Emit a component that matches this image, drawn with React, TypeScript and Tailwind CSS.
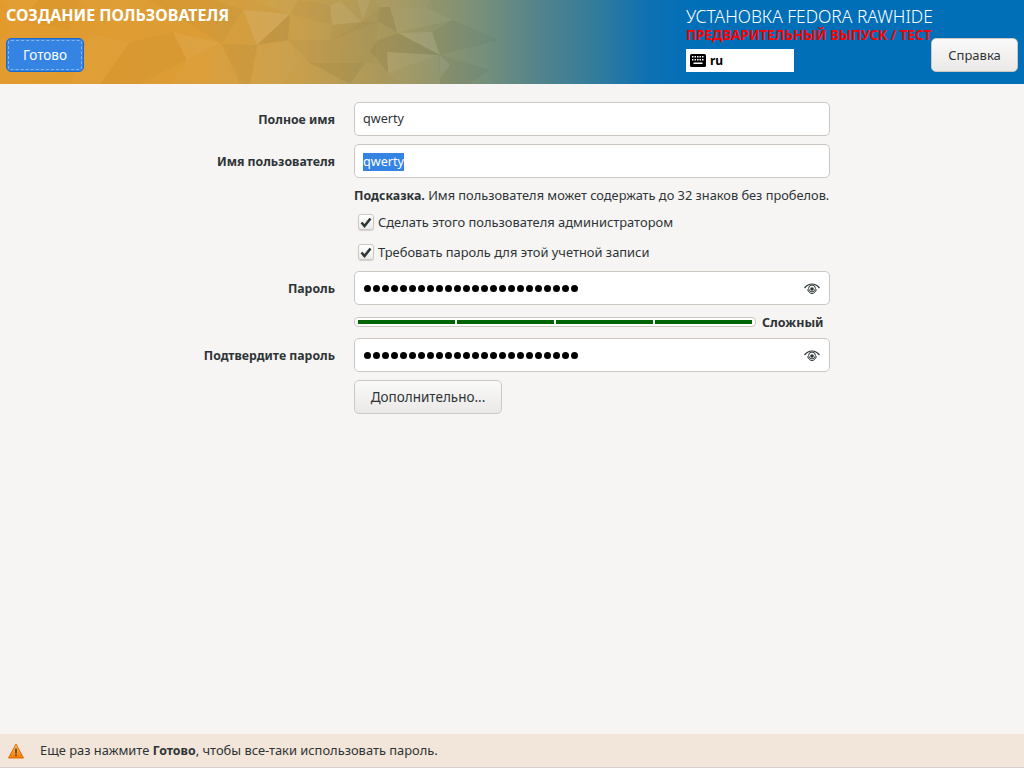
import React from "react";

const facets: [string, string, number][] = [
  ["0,0 38,0 22,22", "#fff", 0.03],
  ["38,0 80,0 70,30 22,22", "#000", 0.015],
  ["80,0 150,0 118,24", "#fff", 0.025],
  ["0,40 22,22 60,75 0,84", "#fff", 0.02],
  ["90,34 130,42 100,84 70,84", "#fff", 0.03],
  ["130,42 173,32 187,60 140,84 100,84", "#000", 0.02],
  ["173,32 220,43 187,60", "#fff", 0.055],
  ["187,60 220,43 245,84 170,84", "#fff", 0.025],
  ["150,0 215,0 243,10 222,44", "#000", 0.025],
  ["243,10 290,14 257,45", "#fff", 0.09],
  ["290,14 257,45 288,40", "#000", 0.05],
  ["250,0 290,14 298,0", "#fff", 0.03],
  ["222,44 257,45 250,84 240,84", "#000", 0.03],
  ["257,45 288,40 300,62 282,84 250,84", "#fff", 0.025],
  ["288,40 330,40 380,63 310,63", "#000", 0.025],
  ["298,0 330,5 332,25 290,14", "#000", 0.02],
  ["330,5 340,1 362,22 332,25", "#fff", 0.07],
  ["357,0 370,0 363,20", "#fff", 0.07],
  ["332,25 362,22 378,22 330,40", "#000", 0.025],
  ["362,22 380,7 378,22 375,60 330,40", "#000", 0.02],
  ["380,7 390,7 397,32 378,22", "#000", 0.05],
  ["390,7 427,8 452,20 397,33", "#fff", 0.05],
  ["375,0 430,0 427,8 380,7", "#fff", 0.035],
  ["398,33 432,32 440,55", "#fff", 0.09],
  ["378,40 398,33 440,55 370,51", "#000", 0.05],
  ["387,52 438,55 388,73", "#fff", 0.07],
  ["370,51 387,52 388,73", "#000", 0.05],
  ["310,63 365,63 350,84", "#000", 0.05],
  ["440,55 450,65 440,78", "#fff", 0.09],
  ["452,20 432,32 440,55 500,40", "#000", 0.03],
  ["388,73 438,55 440,84 400,84", "#fff", 0.03],
  ["440,55 490,70 470,84 440,84", "#000", 0.03],
];

function HeaderArt() {
  return (
    <svg className="absolute inset-0 h-full w-full" viewBox="0 0 1024 84" aria-hidden="true">
      {facets.map(([points, fill, opacity]) => (
        <polygon key={points} points={points} fill={fill} fillOpacity={opacity} />
      ))}
    </svg>
  );
}

function KeyboardIcon() {
  return (
    <svg width="16" height="13" viewBox="0 0 16 13" aria-hidden="true">
      <rect x="0" y="0" width="16" height="13" rx="1.5" fill="#000" />
      <g fill="#fff">
        {[2, 4.5, 7, 9.5, 12].map((x) => (
          <React.Fragment key={x}>
            <rect x={x} y="2" width="1.5" height="1.5" />
            <rect x={x} y="5" width="1.5" height="1.5" />
          </React.Fragment>
        ))}
        <rect x="3.5" y="8.5" width="9" height="1.5" />
      </g>
    </svg>
  );
}

function EyeIcon() {
  return (
    <svg width="16" height="12" viewBox="0 0 16 12" fill="none" stroke="#2e3436" aria-hidden="true">
      <path d="M0.5 5C3 2 5.5 1 8 1s5 1 7.5 4" strokeWidth="1.2" />
      <path d="M3.5 6.5C4.5 9.5 6.5 10.5 8 10.5s3.5-1 4.5-4" strokeWidth="1" />
      <circle cx="8" cy="5.5" r="3.4" strokeWidth="1" />
      <circle cx="8" cy="6" r="1.8" fill="#2e3436" stroke="none" />
    </svg>
  );
}

function WarningIcon() {
  return (
    <svg width="16" height="16" viewBox="0 0 16 16" aria-hidden="true">
      <defs>
        <linearGradient id="warn" x1="0" y1="0" x2="0" y2="1">
          <stop offset="0" stopColor="#fcc27c" />
          <stop offset="1" stopColor="#f57900" />
        </linearGradient>
      </defs>
      <path d="M8 1 15.5 15H0.5Z" fill="url(#warn)" stroke="#e06a00" strokeLinejoin="round" />
      <rect x="7.3" y="5.5" width="1.4" height="5" fill="#2e3436" />
      <rect x="7.3" y="11.5" width="1.4" height="1.6" fill="#2e3436" />
    </svg>
  );
}

function Check({ label }: { label: string }) {
  return (
    <div className="flex h-5 items-center pl-[4px] text-[12.9px] text-[#2e3436]">
      <span className="flex h-4 w-4 items-center justify-center rounded-[3px] border border-[#cdc7c2] bg-gradient-to-b from-white to-[#ececea] shadow-[0_1px_1px_rgba(0,0,0,0.15)]">
        <svg width="12" height="11" viewBox="0 0 12 11" fill="none" aria-hidden="true">
          <path d="M1.5 5.5 4.5 9 10.5 1.5" stroke="#2e3436" strokeWidth="2.6" />
        </svg>
      </span>
      <span className="ml-[4px] pt-px">{label}</span>
    </div>
  );
}

function Row({ label, className, children }: { label?: string; className: string; children: React.ReactNode }) {
  return (
    <div className={`flex items-center ${className}`}>
      <div className="mr-[19px] w-[335px] pt-[2px] text-right text-[12.3px] font-bold text-[#2e3436]">{label}</div>
      <div className="w-[476px]">{children}</div>
    </div>
  );
}

function Field({ children }: { children: React.ReactNode }) {
  return (
    <div className="flex h-[34px] items-center rounded-[5px] border border-[#cdc7c2] bg-white px-[8px] pt-px text-[12.6px] text-[#2e3436]">
      {children}
    </div>
  );
}

function PasswordField() {
  return (
    <Field>
      <div className="flex gap-[2px] pl-[1px]">
        {Array.from({ length: 24 }).map((_, i) => (
          <span key={i} className="h-[7px] w-[7px] rounded-full bg-black" />
        ))}
      </div>
      <span className="mr-[1px] ml-auto flex">
        <EyeIcon />
      </span>
    </Field>
  );
}

export default function App() {
  return (
    <div className="flex h-screen w-[1024px] flex-col overflow-hidden bg-[#f6f5f4] font-['Noto_Sans','Open_Sans',sans-serif]">
      <header className="relative flex h-[84px] shrink-0 bg-[linear-gradient(90deg,#e29a2b_0px,#dc9d36_200px,#c89f4c_300px,#a3975f_400px,#78907a_480px,#558489_535px,#337c9c_595px,#0d70b3_650px,#006fb8_700px)] px-[6px]">
        <HeaderArt />
        <div className="relative">
          <h1 className="mt-[5px] h-[20px] text-[16px] leading-[20px] font-bold whitespace-nowrap text-white">
            СОЗДАНИЕ ПОЛЬЗОВАТЕЛЯ
          </h1>
          <button className="mt-[13px] flex h-[34px] w-[78px] items-center justify-center rounded-[5px] border border-[#1b6acb] bg-[#3584e4] pt-px text-[13.5px] text-white outline-1 -outline-offset-3 outline-white/40 outline-dashed">
            Готово
          </button>
        </div>
        <div className="relative mt-[6px] ml-auto w-[245px]">
          <div className="h-[20px] text-[17.4px] leading-[20px] font-light whitespace-nowrap text-white">
            УСТАНОВКА FEDORA RAWHIDE
          </div>
          <div className="h-[16px] pt-px text-[13.4px] leading-[16px] font-bold whitespace-nowrap text-[#ff0000]">
            ПРЕДВАРИТЕЛЬНЫЙ ВЫПУСК / ТЕСТ
          </div>
          <div className="mt-[7px] flex h-[23px] w-[108px] items-center bg-white pl-[4px] text-[12px] font-bold text-black">
            <KeyboardIcon />
            <span className="ml-[4px] pt-px">ru</span>
          </div>
        </div>
        <button className="relative mt-[38px] flex h-[34px] w-[87px] items-center justify-center self-start rounded-[5px] border border-[#cdc7c2] bg-gradient-to-b from-[#fafafa] to-[#ebe9e7] pt-px text-[13px] text-[#2e3436]">
          Справка
        </button>
      </header>

      <main className="flex-1 pt-[18px]">
        <Row label="Полное имя" className="">
          <Field>qwerty</Field>
        </Row>
        <Row label="Имя пользователя" className="mt-[8px]">
          <Field>
            <span className="bg-[#3584e4] leading-[18px] text-white">qwerty</span>
          </Field>
        </Row>
        <Row className="mt-[8px] h-[18px]">
          <p className="pt-px text-[12.8px] whitespace-nowrap text-[#2e3436]">
            <b className="text-[12.4px]">Подсказка.</b> Имя пользователя может содержать до 32 знаков без пробелов.
          </p>
        </Row>
        <Row className="mt-[8px]">
          <Check label="Сделать этого пользователя администратором" />
        </Row>
        <Row className="mt-[10px]">
          <Check label="Требовать пароль для этой учетной записи" />
        </Row>
        <Row label="Пароль" className="mt-[9px]">
          <PasswordField />
        </Row>
        <Row className="mt-[8px] h-[18px]">
          <div className="flex items-center">
            <div className="flex h-[10px] w-[402px] items-center gap-[2px] rounded-[4px] border border-[#cdc7c2] bg-white px-[3px]">
              {[0, 1, 2, 3].map((i) => (
                <span key={i} className="h-[4px] flex-1 bg-[#006400]" />
              ))}
            </div>
            <span className="ml-[6px] pt-[2px] text-[12.5px] font-bold text-[#2e3436]">Сложный</span>
          </div>
        </Row>
        <Row label="Подтвердите пароль" className="mt-[7px]">
          <PasswordField />
        </Row>
        <Row className="mt-[8px]">
          <button className="flex h-[34px] w-[148px] items-center justify-center rounded-[5px] border border-[#cdc7c2] bg-gradient-to-b from-[#fafafa] to-[#ebe9e7] pt-px text-[13.5px] text-[#2e3436]">
            Дополнительно...
          </button>
        </Row>
      </main>

      <footer className="flex h-[34px] shrink-0 items-center border-b border-[#d5d0cc] bg-[#f2e5d9] pl-[8px] text-[12.9px] text-[#2e3436]">
        <WarningIcon />
        <span className="ml-[16px] pt-px">
          Еще раз нажмите <b className="text-[12.4px]">Готово</b>, чтобы все-таки использовать пароль.
        </span>
      </footer>
    </div>
  );
}
